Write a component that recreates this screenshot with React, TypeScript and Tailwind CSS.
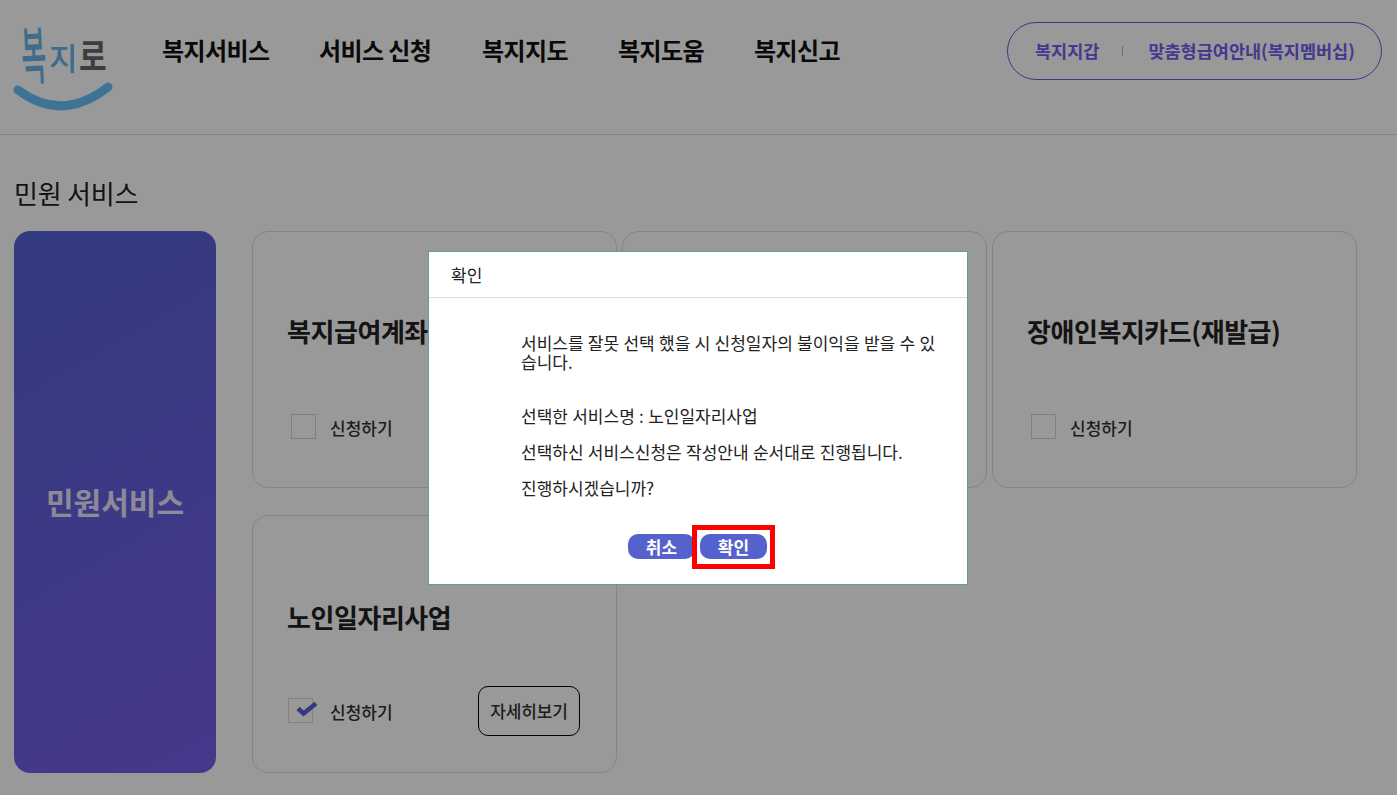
const FONT = "font-['Noto_Sans_CJK_KR','Noto_Sans',sans-serif]";

const NAV = [
  { label: "복지서비스", width: "w-[107px]" },
  { label: "서비스 신청", width: "w-[113px]" },
  { label: "복지지도", width: "w-[86px]" },
  { label: "복지도움", width: "w-[86px]" },
  { label: "복지신고", width: "w-[86px]" },
];

function Logo() {
  return (
    <div className="relative h-[96px] w-[104px] shrink-0 font-medium">
      <span className="absolute left-[8px] top-[22px] scale-x-[0.8] scale-y-[1.85] -rotate-3 text-[34px] leading-[34px] text-[#68b4e6]">복</span>
      <span className="absolute left-[39px] top-[27px] text-[31px] leading-[31px] text-[#68b4e6]">지</span>
      <span className="absolute left-[69px] top-[25px] scale-y-[1.2] text-[30px] leading-[30px] font-bold text-[#666]">로</span>
      <svg className="absolute left-0 top-0 overflow-visible" width="104" height="96" viewBox="0 0 104 96" fill="none">
        <path d="M8 76 Q 52 109 98 73" stroke="#68c0f8" strokeWidth="9" strokeLinecap="round" />
      </svg>
    </div>
  );
}

function Checkbox({ checked }: { checked?: boolean }) {
  return (
    <div className={checked ? "relative -ml-[3px] mr-[3px] size-[25px] border border-[#d8d8d8]" : "relative size-[25px] border border-[#d4d4d4]"}>
      {checked ? (
        <svg className="absolute -left-px -top-px overflow-visible" width="25" height="25" viewBox="0 0 25 25" fill="none">
          <path d="M10 10.5 L15.5 15.5 L28 5.5" stroke="#5a60d6" strokeWidth="4.5" strokeLinejoin="miter" />
        </svg>
      ) : null}
    </div>
  );
}

function ServiceCard({ title, checked, detail, tall }: { title?: string; checked?: boolean; detail?: boolean; tall?: boolean }) {
  return (
    <article className={`flex w-[365px] flex-col rounded-2xl border border-[#ddd] bg-white pl-[34px] pr-[36px] ${tall ? "h-[258px]" : "h-[257px]"}`}>
      {title ? (
        <>
          <h3 className={`h-[40px] whitespace-nowrap text-[26px] leading-[40px] font-bold tracking-[-0.45px] text-[#222] ${tall ? "mt-[81px]" : "mt-[79px]"}`}>{title}</h3>
          <div className={`mt-auto flex h-[50px] items-center ${tall ? "mb-[36px]" : "mb-[35px]"}`}>
            <div className="ml-[4px] mt-[-1px]"><Checkbox checked={checked} /></div>
            <span className="ml-[14px] mt-[2px] text-[17px] font-medium text-[#333]">신청하기</span>
            {detail ? (
              <button className="ml-auto h-[50px] w-[102px] rounded-[10px] border border-black text-[17px] font-medium tracking-[-0.1px] text-[#333]" type="button">자세히보기</button>
            ) : null}
          </div>
        </>
      ) : null}
    </article>
  );
}

export default function App() {
  return (
    <div className={`relative h-[795px] w-[1397px] overflow-hidden bg-white ${FONT}`}>
      <header className="flex h-[135px] items-start border-b border-[#ddd] pl-[10px]">
        <div className="pt-[14px]"><Logo /></div>
        <nav className="ml-[48px] flex gap-[50px] pt-[32px]">
          {NAV.map((item) => (
            <a key={item.label} className={`${item.width} whitespace-nowrap text-[24px] leading-[36px] font-bold tracking-[-0.6px] text-[#111]`}>{item.label}</a>
          ))}
        </nav>
        <div className="ml-auto mr-[15px] mt-[22px] flex h-[58px] w-[375px] items-center rounded-[29px] border border-[#6060e6] pl-[27px] text-[17.5px] font-bold text-[#7060f0]">
          <span>복지지갑</span>
          <span className="ml-[23px] mr-[25px] h-[10px] w-px bg-[#bbb]" />
          <span>맞춤형급여안내(복지멤버십)</span>
        </div>
      </header>

      <main className="px-[14px] pt-[38px]">
        <h2 className="h-[40px] text-[26px] leading-[40px] font-normal tracking-[-0.2px] text-[#222]">민원 서비스</h2>
        <div className="mt-[18px] flex">
          <aside className="flex h-[542px] w-[202px] shrink-0 items-center justify-center rounded-2xl bg-linear-150 from-[#5361d5] to-[#765de9]">
            <span className="-mt-[2px] text-[30px] font-bold text-white/85">민원서비스</span>
          </aside>
          <div className="ml-[36px] flex flex-col gap-[27px]">
            <div className="flex gap-[5px]">
              <ServiceCard title="복지급여계좌변경" />
              <ServiceCard />
              <ServiceCard title="장애인복지카드(재발급)" />
            </div>
            <ServiceCard title="노인일자리사업" checked detail tall />
          </div>
        </div>
      </main>

      {/* dim layer */}
      <div className="absolute inset-0 bg-black/40" />

      {/* confirm dialog */}
      <div className="absolute left-[428px] top-[251px] h-[334px] w-[540px] border border-[#5f9ea0] bg-white text-[#222]">
        <div className="flex h-[46px] items-center border-b border-[#ddd] pl-[22px] text-[17px]">확인</div>
        <div className="pl-[92px] pr-[28px] pt-[35px] text-[17px] [word-spacing:0.5px]">
          <p className="leading-[19px]">서비스를 잘못 선택 했을 시 신청일자의 불이익을 받을 수 있습니다.</p>
          <p className="mt-[35px] leading-[20px]">선택한 서비스명 : 노인일자리사업</p>
          <p className="mt-[16px] leading-[20px]">선택하신 서비스신청은 작성안내 순서대로 진행됩니다.</p>
          <p className="mt-[16px] leading-[20px]">진행하시겠습니까?</p>
        </div>
        <div className="mt-[36px] flex justify-center gap-[5px] pr-[2px]">
          <button className="h-[25px] w-[67px] rounded-[10px] bg-[#5561cc] pl-[1px] text-[17px] font-bold leading-[25px] text-white" type="button">취소</button>
          <button className="h-[25px] w-[67px] rounded-[10px] bg-[#5561cc] pl-[1px] text-[17px] font-bold leading-[25px] text-white" type="button">확인</button>
        </div>
      </div>

      {/* red highlight over the confirm button */}
      <div className="absolute left-[692px] top-[525px] h-[44px] w-[83px] border-[5px] border-[#ff0000]" />
    </div>
  );
}
